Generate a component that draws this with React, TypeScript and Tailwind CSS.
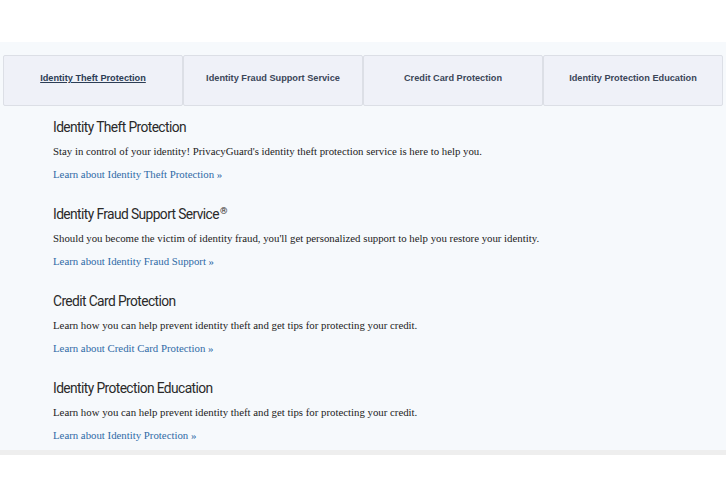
const tabs = [
  "Identity Theft Protection",
  "Identity Fraud Support Service",
  "Credit Card Protection",
  "Identity Protection Education",
];

const sections = [
  {
    title: "Identity Theft Protection",
    reg: false,
    text: "Stay in control of your identity! PrivacyGuard's identity theft protection service is here to help you.",
    link: "Learn about Identity Theft Protection »",
  },
  {
    title: "Identity Fraud Support Service",
    reg: true,
    text: "Should you become the victim of identity fraud, you'll get personalized support to help you restore your identity.",
    link: "Learn about Identity Fraud Support »",
  },
  {
    title: "Credit Card Protection",
    reg: false,
    text: "Learn how you can help prevent identity theft and get tips for protecting your credit.",
    link: "Learn about Credit Card Protection »",
  },
  {
    title: "Identity Protection Education",
    reg: false,
    text: "Learn how you can help prevent identity theft and get tips for protecting your credit.",
    link: "Learn about Identity Protection »",
  },
];

export default function App() {
  return (
    <div className="w-[726px] h-[495px] bg-white overflow-hidden">
      <div className="h-[42px]" />
      <div className="bg-[#f6f9fc] h-[408px] pt-[13px] px-[3px]">
        {/* tab strip */}
        <div className="grid grid-cols-4 h-[51px]">
          {tabs.map((t, i) => (
            <div
              key={t}
              className="flex justify-center pt-[16px] bg-[#eff1f8] border border-[#dcdfe6] rounded-[2px] font-['Liberation_Sans',Arial,sans-serif] font-bold text-[9.2px] leading-[12px]"
            >
              <span className={i === 0 ? "underline text-[#2c3d55]" : "text-[#3b4658]"}>{t}</span>
            </div>
          ))}
        </div>

        <div className="pl-[50px] pt-[11px]">
          {sections.map((s) => (
            <div key={s.title} className="h-[87px]">
              <h2 className="h-[20px] leading-[20px] text-[13.8px] text-[#2a2a2a] font-['Roboto',sans-serif] tracking-[-0.6px]">
                {s.title}
                {s.reg && <sup className="text-[9.5px] ml-[1px]">®</sup>}
              </h2>
              <p className="mt-[7px] h-[14px] leading-[14px] text-[10.8px] text-[#222] font-['Liberation_Serif','Times_New_Roman',serif]">
                {s.text}
              </p>
              <a
                href="#"
                className="block mt-[9px] h-[14px] leading-[14px] text-[10.8px] text-[#2f6aa6] font-['Liberation_Serif','Times_New_Roman',serif]"
              >
                {s.link}
              </a>
            </div>
          ))}
        </div>
      </div>
      <div className="h-[5px] bg-[#eeeeee]" />
    </div>
  );
}
